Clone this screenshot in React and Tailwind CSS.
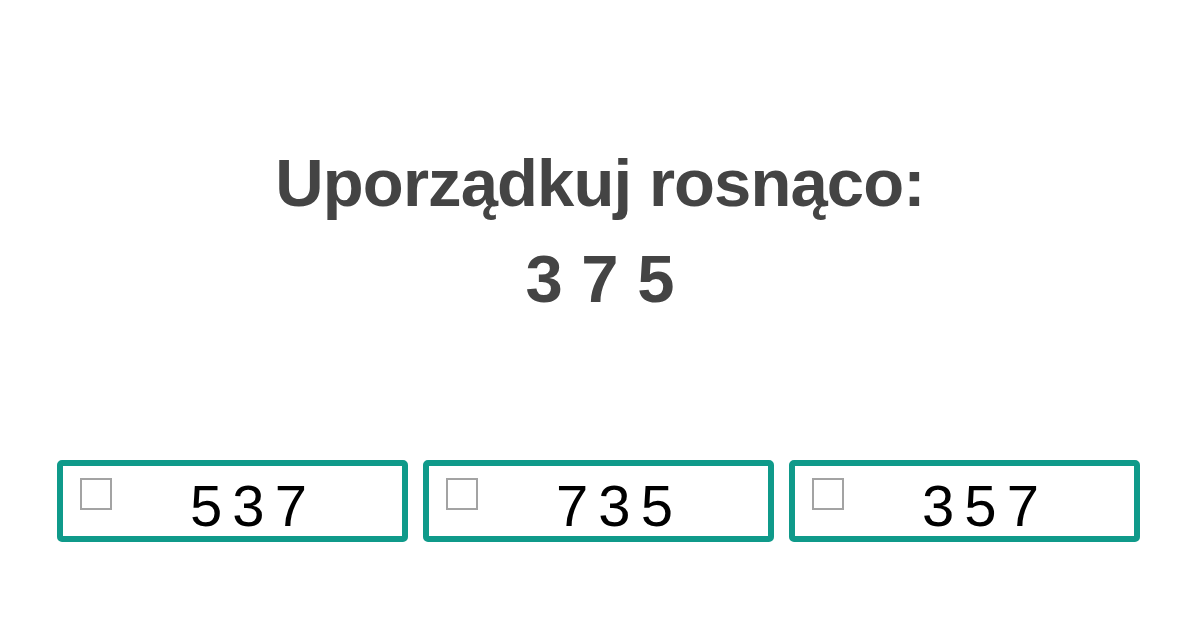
import { useState } from 'react';

const options = ['5 3 7', '7 3 5', '3 5 7'];

const App = () => {
  const [picked, setPicked] = useState(null);

  return (
    <div className="min-h-[630px] w-[1200px] bg-white font-['Liberation_Sans',Arial,sans-serif]">
      {/* Question */}
      <div className="pt-[135px] text-center text-[#444444] font-bold text-[67px] leading-[96px] tracking-[-0.9px]">
        <div>Uporządkuj rosnąco:</div>
        <div className="tracking-normal">3 7 5</div>
      </div>

      {/* Answers */}
      <div className="mt-[133px] grid grid-cols-3 gap-[15px] pl-[57px] pr-[60px]">
        {options.map((opt, i) => (
          <button
            key={opt}
            type="button"
            onClick={() => setPicked(i)}
            className="flex items-start h-[82px] border-[6px] border-[#0f9a8a] rounded-[5px] bg-white px-[17px] pt-[12px]"
          >
            <span className="w-[32px] h-[32px] border-2 border-[#a3a3a3] bg-white shrink-0 flex items-center justify-center">
              {picked === i && <span className="w-[16px] h-[16px] bg-[#0f9a8a]" />}
            </span>
            <span className="flex-1 text-center text-black text-[58px] leading-none [word-spacing:-6px] -mt-[1px]">
              {opt}
            </span>
          </button>
        ))}
      </div>
    </div>
  );
};

export default App;
